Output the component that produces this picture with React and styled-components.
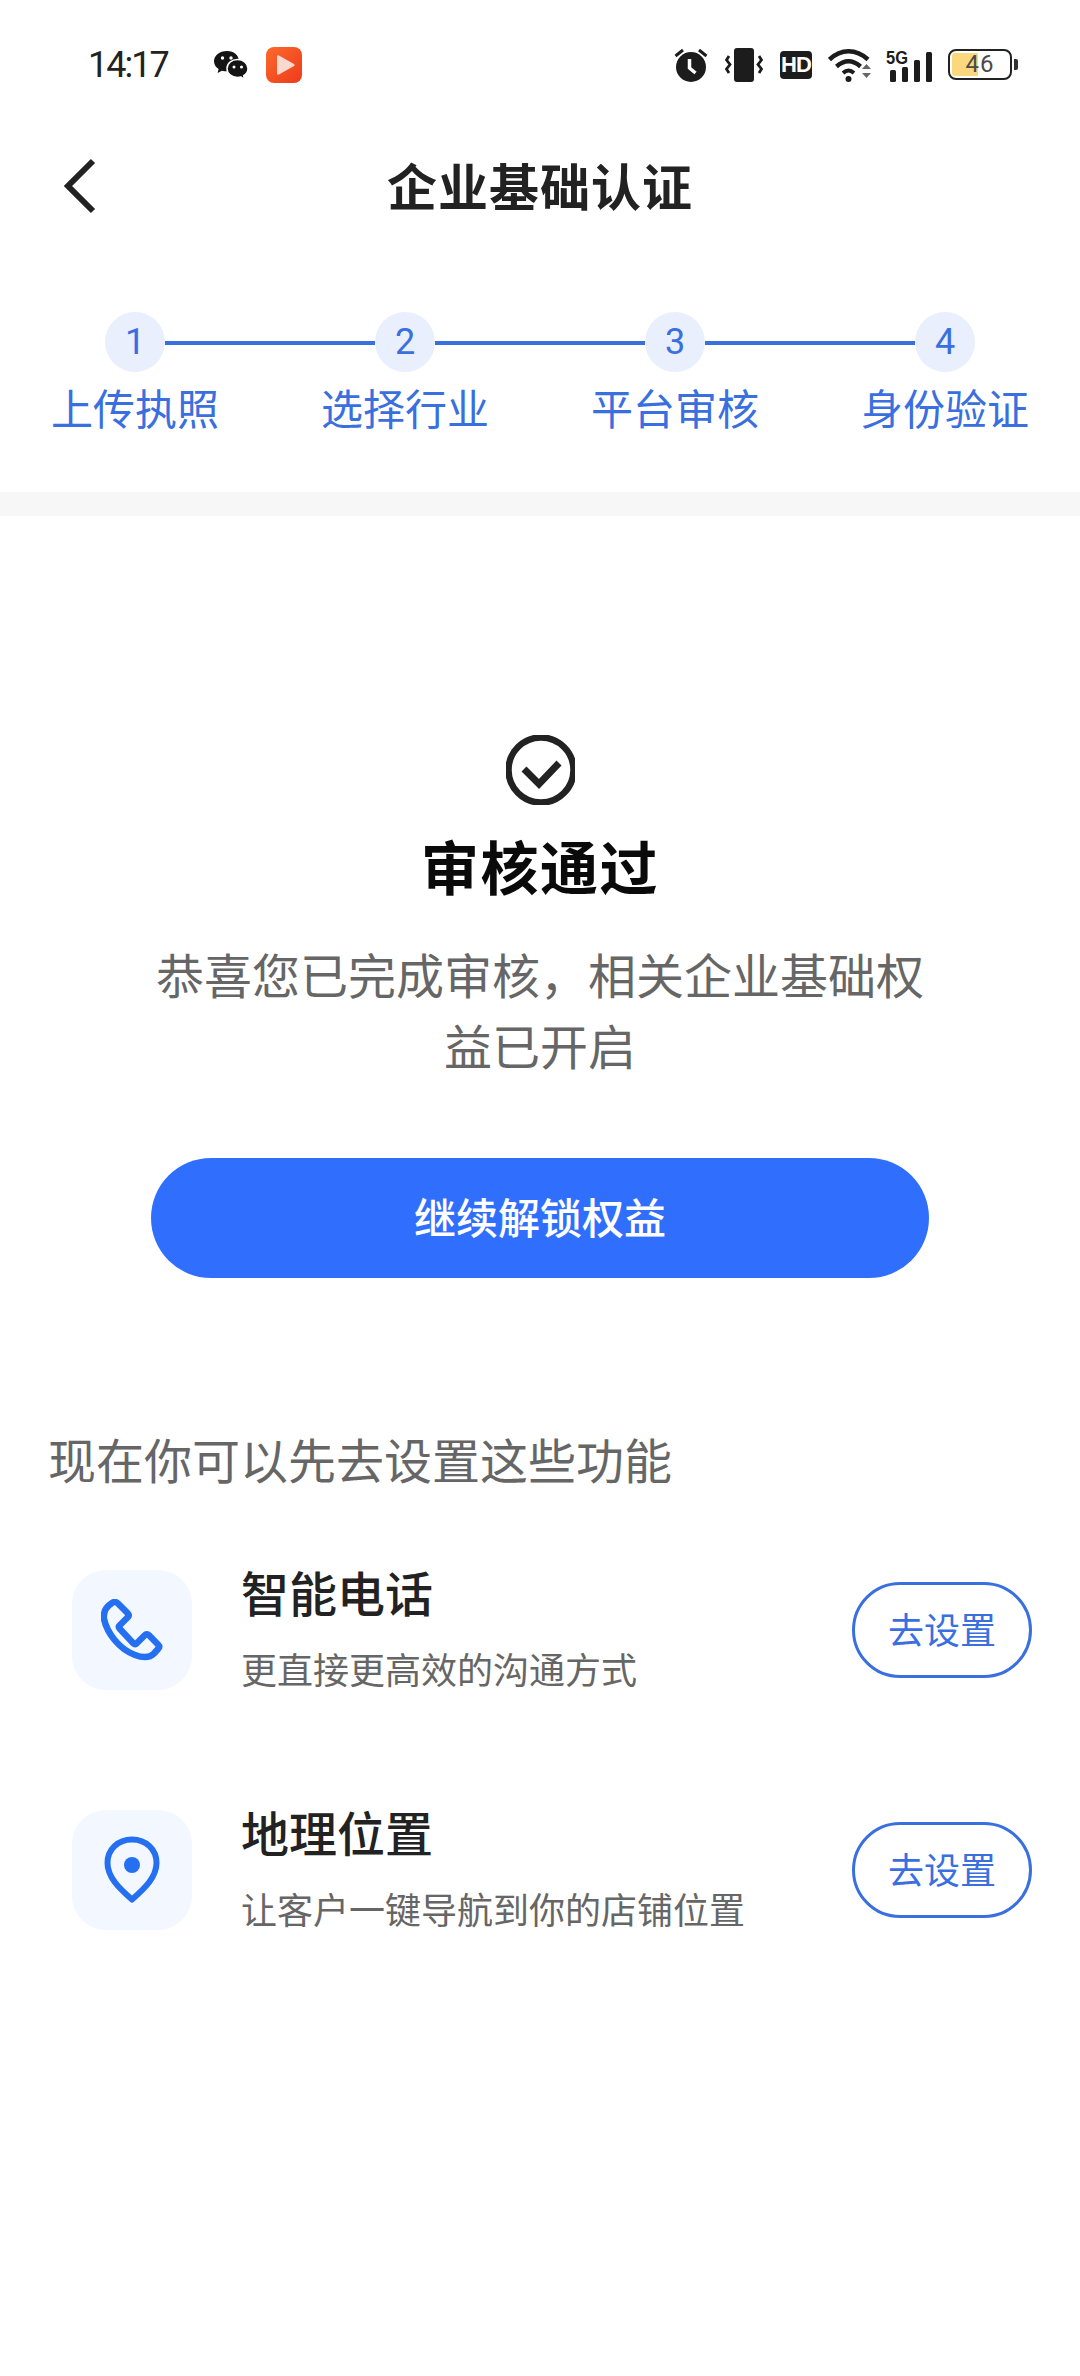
import React from "react";
import styled, { createGlobalStyle } from "styled-components";

const CJK = `"Noto Sans CJK SC", "Noto Sans", sans-serif`;
const BLUE = "#3a6fe0";
const PRIMARY = "#306ffe";

const Global = createGlobalStyle`
  html, body { margin: 0; padding: 0; background: #fff; }
  body { font-family: ${CJK}; }
  * { box-sizing: border-box; }
`;

const Page = styled.div`
  width: 1080px;
  height: 2376px;
  background: #fff;
  overflow: hidden;
`;

const StatusBar = styled.div`
  height: 130px;
  display: flex;
  align-items: center;
  padding: 0 62px 1px 88px;
`;
const Time = styled.div`
  font-family: Roboto, sans-serif;
  font-size: 36px;
  letter-spacing: -2px;
  color: #222;
  width: 125px;
`;
const AppIcons = styled.div`
  display: flex;
  align-items: center;
  gap: 17px;
  flex: 1;
`;
const SysIcons = styled.div`
  display: flex;
  align-items: center;
`;
const HdBadge = styled.div`
  width: 32px;
  height: 28px;
  margin: 0 16px 0 17px;
  border-radius: 4px;
  background: #1c1c1c;
  color: #fff;
  font: 700 22px/28px "Liberation Sans", sans-serif;
  letter-spacing: -1px;
  text-align: center;
`;
const Battery = styled.div`
  display: flex;
  align-items: center;
  margin-left: 15px;
`;
const BatteryBody = styled.div`
  width: 64px;
  height: 31px;
  border: 2.5px solid #222;
  border-radius: 8px;
  padding: 2px;
  overflow: hidden;
  display: flex;
  position: relative;
`;
const BatteryFill = styled.div`
  height: 100%;
  border-radius: 3px 0 0 3px;
  background: #fbd77e;
`;
const BatteryText = styled.span`
  position: absolute;
  inset: 0;
  text-align: center;
  font: 400 24px/26px Roboto, sans-serif;
  letter-spacing: 1px;
  color: #4a4a4a;
`;
const BatteryNub = styled.div`
  width: 4px;
  height: 11px;
  margin-left: 2px;
  background: #333;
  border-radius: 0 2px 2px 0;
`;

const Nav = styled.div`
  height: 116px;
  padding-bottom: 8px;
  display: flex;
  align-items: center;
  justify-content: center;
  position: relative;
`;
const BackIcon = styled.svg`
  position: absolute;
  left: 62px;
  top: 28px;
`;
const NavTitle = styled.div`
  font-size: 50px;
  font-weight: 700;
  color: #222;
  letter-spacing: 1px;
`;

const Stepper = styled.div`
  padding-top: 66px;
  height: 246px;
`;
const StepTrack = styled.div`
  display: flex;
  padding: 0 105px;
`;
const StepDot = styled.div`
  width: 60px;
  height: 60px;
  border-radius: 50%;
  flex: none;
  background: #e9effc;
  color: ${BLUE};
  font: 400 36px/60px Roboto, sans-serif;
  text-align: center;
`;
const StepLine = styled.div`
  flex: 1;
  height: 4px;
  margin-top: 29px;
  background: ${BLUE};
`;
const StepLabels = styled.div`
  display: grid;
  grid-template-columns: repeat(4, 270px);
  margin-top: 6px;
`;
const StepLabel = styled.div`
  text-align: center;
  color: ${BLUE};
  font-size: 42px;
  line-height: 58px;
`;

const Band = styled.div`
  height: 24px;
  background: #f7f7f7;
`;

const Result = styled.div`
  display: flex;
  flex-direction: column;
  align-items: center;
  padding-top: 219px;
`;
const ResultTitle = styled.div`
  margin-top: 18px;
  font-size: 58px;
  line-height: 84px;
  font-weight: 700;
  color: #0a0a0a;
  letter-spacing: 1.5px;
`;
const ResultText = styled.div`
  width: 790px;
  margin-top: 31px;
  text-align: center;
  font-size: 48px;
  line-height: 71px;
  color: #666;
`;
const PrimaryButton = styled.button`
  width: 778px;
  height: 120px;
  margin-top: 78px;
  padding: 0 0 6px;
  border: 0;
  border-radius: 60px;
  background: ${PRIMARY};
  color: #fff;
  font-family: ${CJK};
  font-size: 42px;
  font-weight: 500;
`;

const SectionTitle = styled.div`
  margin: 145px 0 0 48px;
  font-size: 48px;
  line-height: 70px;
  color: #666;
`;

const FeatureList = styled.div`
  margin-top: 77px;
  display: flex;
  flex-direction: column;
  gap: 120px;
  padding: 0 48px 0 72px;
`;
const Feature = styled.div`
  height: 120px;
  display: flex;
  align-items: center;
`;
const FeatureIcon = styled.div`
  width: 120px;
  height: 120px;
  flex: none;
  border-radius: 34px;
  background: #f3f7ff;
  display: flex;
  align-items: center;
  justify-content: center;
`;
const FeatureBody = styled.div`
  flex: 1;
  margin-left: 49px;
`;
const FeatureName = styled.div`
  font-size: 48px;
  line-height: 60px;
  font-weight: 500;
  color: #222;
  margin-top: -7px;
`;
const FeatureDesc = styled.div`
  font-size: 36px;
  line-height: 50px;
  margin-top: 22px;
  color: #666;
`;
const OutlineButton = styled.button`
  width: 180px;
  height: 96px;
  flex: none;
  border: 3px solid ${BLUE};
  border-radius: 48px;
  background: #fff;
  color: ${BLUE};
  font-family: ${CJK};
  font-size: 36px;
  padding: 0 0 5px;
`;

const WeChat = () => (
  <svg width="36" height="30" viewBox="0 0 36 30">
    <path fill="#141414" d="M14 1C6.5 1 1 5.600 1 11.200c0 3.200 1.800 6 4.600 7.900L4.600 23l4.300-2.300c1.500.4 3.200.6 5 .6 7.400 0 12-5 12-10.100C25.900 5.600 21.500 1 14 1z" />
    <path fill="#141414" stroke="#fff" strokeWidth="1.500" d="M24.500 9.500c-6 0-10.500 4-10.500 9s4.500 9 10.500 9c1.300 0 2.500-.2 3.600-.5l3.400 2.500-.8-3.800c2.800-1.700 4.300-4.300 4.300-7.200 0-5-4.500-9-10.500-9z" />
    <circle cx="9.500" cy="8" r="1.700" fill="#fff" />
    <circle cx="18" cy="8" r="1.700" fill="#fff" />
    <circle cx="21" cy="17" r="1.500" fill="#fff" />
    <circle cx="28.500" cy="17" r="1.500" fill="#fff" />
  </svg>
);

const PlayApp = () => (
  <svg width="36" height="36" viewBox="0 0 36 36">
    <defs>
      <linearGradient id="playBg" x1="0" y1="0" x2="1" y2="1">
        <stop offset="0" stopColor="#fb6a2c" />
        <stop offset="1" stopColor="#ee3a1c" />
      </linearGradient>
    </defs>
    <rect width="36" height="36" rx="8" fill="url(#playBg)" />
    <path d="M11 9.500c0-1 1-1.600 1.900-1.100L28 17c.8.500.8 1.500 0 2l-15.100 8.600c-.9.500-1.900-.1-1.900-1.100z" fill="#fbd9cf" />
  </svg>
);

const Alarm = () => (
  <svg width="34" height="34" viewBox="0 0 34 34">
    <circle cx="17" cy="19" r="15" fill="#1c1c1c" />
    <path d="M15.500 11v9l6 5" fill="none" stroke="#fff" strokeWidth="3.500" />
    <path d="M1.500 8 9 2M32.500 8 25 2" stroke="#1c1c1c" strokeWidth="3" fill="none" />
  </svg>
);

const Vibrate = () => (
  <svg width="38" height="34" viewBox="0 0 38 34" style={{ marginLeft: 17 }}>
    <rect x="9" y="0" width="20" height="34" rx="3" fill="#1c1c1c" />
    <path d="M4 8 1.500 12l3.500 4.500-3.500 4.500L4 25M34 8l2.500 4-3.500 4.500 3.500 4.500-2.500 4" fill="none" stroke="#1c1c1c" strokeWidth="2.800" />
  </svg>
);

const Wifi = () => (
  <svg width="46" height="34" viewBox="0 0 46 34">
    <path d="M1.500 11.500C13 .5 28 .5 40 11.500" fill="none" stroke="#1c1c1c" strokeWidth="4.500" />
    <path d="M8.500 18.500c8-7 16-7 24 0" fill="none" stroke="#1c1c1c" strokeWidth="4.500" />
    <path d="M15 25c4-3.500 7-3.500 11 0" fill="none" stroke="#1c1c1c" strokeWidth="4" />
    <circle cx="20.500" cy="31" r="3" fill="#1c1c1c" />
    <path d="M34 21l4.500-5 4.500 5zM34 25h9l-4.500 5z" fill="#666" />
  </svg>
);

const Signal = () => (
  <svg width="48" height="34" viewBox="0 0 48 34" style={{ marginLeft: 11 }}>
    <text x="1" y="16" fontFamily="Liberation Sans, sans-serif" fontWeight="700" fontSize="19" fill="#1c1c1c" textLength="22" lengthAdjust="spacingAndGlyphs">5G</text>
    <rect x="5" y="22" width="6" height="12" rx="1.500" fill="#1c1c1c" />
    <rect x="17" y="19" width="6" height="15" rx="1.500" fill="#1c1c1c" />
    <rect x="29" y="12" width="6" height="22" rx="1.500" fill="#1c1c1c" />
    <rect x="41" y="4" width="6" height="30" rx="1.500" fill="#1c1c1c" />
  </svg>
);

const Back = () => (
  <BackIcon width="34" height="56" viewBox="0 0 34 56">
    <path d="M31 3 6 28l25 25" fill="none" stroke="#222" strokeWidth="6" />
  </BackIcon>
);

const CheckCircle = () => (
  <svg width="69" height="70" viewBox="0 0 69 70">
    <circle cx="35" cy="35" r="32.500" fill="none" stroke="#222" strokeWidth="6.500" />
    <path d="M18 34l15 15 20-21" fill="none" stroke="#222" strokeWidth="7" />
  </svg>
);

const PhoneGlyph = () => (
  <svg width="62" height="62" viewBox="0 0 62 62">
    <path
      d="M11 4C13 2.500 15.500 2.700 17 4.500L26.500 14C28 15.500 28 17 26.500 18.500L18.500 26.500C17.700 27.300 17.700 28.500 18.500 29.500L32.500 44.500C33.500 45.500 34.700 45.500 35.500 44.500L43.500 36.500C45 35 46.700 35 48 36.300L57 45.500C58.500 47 58.500 48.500 57 50L53 54.500C49 58.500 42 59 34 56C18 50 6 34 3 20C2 13 5.500 7.500 11 4Z"
      fill="none"
      stroke="#2570f0"
      strokeWidth="6.500"
      strokeLinejoin="round"
    />
  </svg>
);

const PinGlyph = () => (
  <svg width="56" height="68" viewBox="0 0 56 68">
    <path
      d="M28 3.500C14 3.500 3.500 13.500 3.500 27c0 14 11.500 25 24.500 36.500C41 52 52.500 41 52.500 27 52.500 13.500 42 3.500 28 3.500z"
      fill="none"
      stroke="#2570f0"
      strokeWidth="6"
      strokeLinejoin="round"
    />
    <circle cx="28" cy="29" r="8" fill="#2570f0" />
  </svg>
);

const steps = ["上传执照", "选择行业", "平台审核", "身份验证"];

const features = [
  { name: "智能电话", desc: "更直接更高效的沟通方式", icon: <PhoneGlyph /> },
  { name: "地理位置", desc: "让客户一键导航到你的店铺位置", icon: <PinGlyph /> },
];

export default function App() {
  return (
    <Page>
      <Global />
      <StatusBar>
        <Time>14:17</Time>
        <AppIcons>
          <WeChat />
          <PlayApp />
        </AppIcons>
        <SysIcons>
          <Alarm />
          <Vibrate />
          <HdBadge>HD</HdBadge>
          <Wifi />
          <Signal />
          <Battery>
            <BatteryBody>
              <BatteryFill style={{ width: "46%" }} />
              <BatteryText>46</BatteryText>
            </BatteryBody>
            <BatteryNub />
          </Battery>
        </SysIcons>
      </StatusBar>
      <Nav>
        <Back />
        <NavTitle>企业基础认证</NavTitle>
      </Nav>
      <Stepper>
        <StepTrack>
          {steps.map((s, i) => (
            <React.Fragment key={s}>
              <StepDot>{i + 1}</StepDot>
              {i < steps.length - 1 && <StepLine />}
            </React.Fragment>
          ))}
        </StepTrack>
        <StepLabels>
          {steps.map((s) => (
            <StepLabel key={s}>{s}</StepLabel>
          ))}
        </StepLabels>
      </Stepper>
      <Band />
      <Result>
        <CheckCircle />
        <ResultTitle>审核通过</ResultTitle>
        <ResultText>恭喜您已完成审核，相关企业基础权益已开启</ResultText>
        <PrimaryButton>继续解锁权益</PrimaryButton>
      </Result>
      <SectionTitle>现在你可以先去设置这些功能</SectionTitle>
      <FeatureList>
        {features.map((f) => (
          <Feature key={f.name}>
            <FeatureIcon>{f.icon}</FeatureIcon>
            <FeatureBody>
              <FeatureName>{f.name}</FeatureName>
              <FeatureDesc>{f.desc}</FeatureDesc>
            </FeatureBody>
            <OutlineButton>去设置</OutlineButton>
          </Feature>
        ))}
      </FeatureList>
    </Page>
  );
}
